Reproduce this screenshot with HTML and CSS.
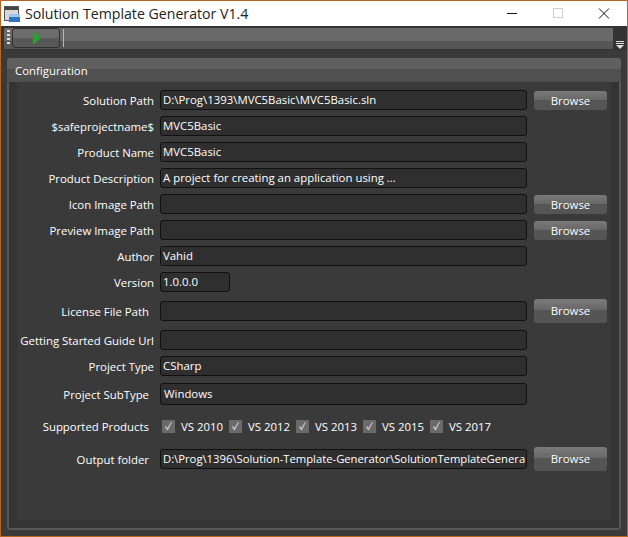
FILE: index.html
```html
<!DOCTYPE html>
<html>

	<head>
		<meta charset="UTF-8">
		<title>Solution Template Generator V1.4</title>
		<link rel="stylesheet" href="styles.css">
	</head>

	<body>
		<div class="window">
			<div class="titlebar">
				<svg class="app-icon" width="16" height="16" viewBox="0 0 16 16">
					<rect x="0.5" y="0.5" width="14" height="14" fill="#d8d8d8" stroke="#555"/>
					<rect x="1" y="1" width="13" height="3" fill="#444"/>
					<rect x="5" y="9" width="11" height="7" fill="#2f74c4"/>
					<rect x="5" y="8" width="11" height="3" fill="#9cc4ec"/>
				</svg>
				<span class="app-title">Solution Template Generator V1.4</span>
				<div class="win-buttons">
					<svg width="46" height="25" viewBox="0 0 46 25"><path d="M18 12.5h10" stroke="#111" fill="none"/></svg>
					<svg width="46" height="25" viewBox="0 0 46 25"><rect x="18.5" y="7.5" width="9" height="9" stroke="#ccc" fill="none"/></svg>
					<svg width="46" height="25" viewBox="0 0 46 25"><path d="M18 7.5l10 10M28 7.5l-10 10" stroke="#111" fill="none"/></svg>
				</div>
			</div>

			<div class="toolbar">
				<div class="tool-strip">
					<div class="grip"></div>
					<div class="run-btn">
						<svg width="8" height="14" viewBox="0 0 8 14"><path d="M0 0l8 7-8 7z" fill="#22a52a"/></svg>
					</div>
					<div class="tool-sep"></div>
				</div>
				<div class="overflow">
					<svg width="8" height="8" viewBox="0 0 8 8"><path d="M0 0h8v1H0zM0 2h8v1H0zM0 4h8L4 8z" fill="#ddd"/></svg>
				</div>
			</div>

			<div class="group">
				<div class="group-header">Configuration</div>
				<div class="group-body">
					<div class="row">
						<label>Solution Path</label>
						<div class="input wide">D:\Prog\1393\MVC5Basic\MVC5Basic.sln</div>
						<div class="btn">Browse</div>
					</div>
					<div class="row">
						<label>$safeprojectname$</label>
						<div class="input wide">MVC5Basic</div>
					</div>
					<div class="row">
						<label>Product Name</label>
						<div class="input wide">MVC5Basic</div>
					</div>
					<div class="row">
						<label>Product Description</label>
						<div class="input wide">A project for creating an application using ...</div>
					</div>
					<div class="row">
						<label>Icon Image Path</label>
						<div class="input wide"></div>
						<div class="btn">Browse</div>
					</div>
					<div class="row">
						<label>Preview Image Path</label>
						<div class="input wide"></div>
						<div class="btn">Browse</div>
					</div>
					<div class="row">
						<label>Author</label>
						<div class="input wide">Vahid</div>
					</div>
					<div class="row">
						<label>Version</label>
						<div class="input short">1.0.0.0</div>
					</div>
					<div class="row row-license">
						<label class="inset">License File Path</label>
						<div class="input wide"></div>
						<div class="btn btn-tall">Browse</div>
					</div>
					<div class="row row-guide">
						<label>Getting Started Guide Url</label>
						<div class="input wide"></div>
					</div>
					<div class="row">
						<label>Project Type</label>
						<div class="input wide">CSharp</div>
					</div>
					<div class="row row-subtype">
						<label class="inset">Project SubType</label>
						<div class="input wide">Windows</div>
					</div>
					<div class="row row-products">
						<label class="inset">Supported Products</label>
						<div class="checks">
							<div class="check"><svg class="box" width="13" height="13" viewBox="0 0 13 13"><path d="M3 7l2 3 1 0 4-8-1 0-3.500 6-1.500-2z" fill="#c8c8c8"/></svg>VS 2010</div>
							<div class="check"><svg class="box" width="13" height="13" viewBox="0 0 13 13"><path d="M3 7l2 3 1 0 4-8-1 0-3.500 6-1.500-2z" fill="#c8c8c8"/></svg>VS 2012</div>
							<div class="check"><svg class="box" width="13" height="13" viewBox="0 0 13 13"><path d="M3 7l2 3 1 0 4-8-1 0-3.500 6-1.500-2z" fill="#c8c8c8"/></svg>VS 2013</div>
							<div class="check"><svg class="box" width="13" height="13" viewBox="0 0 13 13"><path d="M3 7l2 3 1 0 4-8-1 0-3.500 6-1.500-2z" fill="#c8c8c8"/></svg>VS 2015</div>
							<div class="check"><svg class="box" width="13" height="13" viewBox="0 0 13 13"><path d="M3 7l2 3 1 0 4-8-1 0-3.500 6-1.500-2z" fill="#c8c8c8"/></svg>VS 2017</div>
						</div>
					</div>
					<div class="row row-output">
						<label class="inset">Output folder</label>
						<div class="input wide fit">D:\Prog\1396\Solution-Template-Generator\SolutionTemplateGenera</div>
						<div class="btn btn-tall">Browse</div>
					</div>
				</div>
			</div>
		</div>
	</body>

</html>
```

FILE: styles.css
```css
html,
body {
	margin: 0;
	height: 100%;
}

body {
	font-family: "Open Sans", "Liberation Sans", sans-serif;
	font-size: 11.4px;
	color: #fff;
	overflow: hidden;
}

.window {
	width: 628px;
	height: 537px;
	box-sizing: border-box;
	border: 1px solid #b5661f;
	background: #3a3a3a;
	display: flex;
	flex-direction: column;
}

.titlebar {
	height: 25px;
	background: #fff;
	display: flex;
	align-items: center;
	padding-left: 3px;
	color: #222;
	flex: none;
}

.app-icon {
	margin-right: 5px;
}

.app-title {
	font-size: 14.15px;
}

.win-buttons {
	margin-left: auto;
	display: flex;
}

.toolbar {
	height: 24px;
	flex: none;
	display: flex;
	background: #333;
}

.tool-strip {
	flex: 1;
	height: 21px;
	margin: 2px 0 0 3px;
	display: flex;
	background: linear-gradient(#6a6a6a 0 62%, #565656 62%);
}

.grip {
	width: 3px;
	height: 16px;
	margin: 2px 2px 0 3px;
	background: repeating-linear-gradient(#ddd 0 2px, transparent 2px 4px);
}

.run-btn {
	width: 48px;
	height: 20px;
	box-sizing: border-box;
	border: 1px solid #2f2f2f;
	border-radius: 3px;
	background: linear-gradient(#6c6c6c 0 50%, #585858 50%);
	display: flex;
	align-items: center;
	padding-left: 20px;
}

.tool-sep {
	width: 1px;
	height: 18px;
	margin: 1px 0 0 3px;
	background: #b5b5b5;
}

.overflow {
	width: 14px;
	display: flex;
	align-items: flex-end;
	justify-content: center;
	padding-bottom: 1px;
}

.group {
	flex: 1;
	margin: 8px 6px 6px 6px;
	border: 2px solid #575757;
	border-top: 0;
	border-radius: 3px;
	background: #343434;
	display: flex;
	flex-direction: column;
}

.group-header {
	height: 24px;
	line-height: 26px;
	padding-left: 8px;
	background: linear-gradient(#606060 0 46%, #505050 46%);
	margin: 0 -2px;
	border-radius: 3px 3px 0 0;
}

.group-body {
	flex: 1;
	background: #3a3a3a;
	margin: 0 8px 8px 8px;
	padding-top: 8px;
	display: flex;
	flex-direction: column;
	gap: 6px;
}

.row {
	display: flex;
	align-items: center;
	height: 20px;
}

.row label {
	width: 137px;
	flex: none;
	box-sizing: border-box;
	text-align: right;
	margin-right: 6px;
	white-space: nowrap;
}

.row label.inset {
	padding-right: 5px;
}

.input {
	height: 20px;
	box-sizing: border-box;
	border: 1px solid #111;
	border-radius: 3px;
	background: #2f2f2f;
	line-height: 18px;
	padding-left: 2px;
	overflow: hidden;
	white-space: nowrap;
}

.fit {
	font-size: 11.25px;
}

.wide {
	width: 367px;
}

.short {
	width: 70px;
}

.btn {
	width: 73px;
	height: 19px;
	flex: none;
	margin-left: 7px;
	box-sizing: border-box;
	border-radius: 3px;
	background: linear-gradient(#7a7a7a, #686868 45%, #555 45%);
	text-align: center;
	line-height: 19px;
}

.btn-tall {
	height: 24px;
	line-height: 24px;
}

.row-license {
	margin-top: 3px;
}

.row-guide {
	margin-top: 3px;
}

.row-subtype {
	height: 22px;
	margin-top: 1px;
}

.row-subtype .input {
	height: 22px;
	line-height: 20px;
	padding-left: 3px;
}

.row-products {
	margin-top: 5px;
}

.row-output {
	margin-top: 7px;
}

.checks {
	display: flex;
	padding-left: 2px;
}

.check {
	width: 67px;
	display: flex;
	align-items: center;
}

.box {
	margin-right: 6px;
	background: #6a6a6a;
}
```
